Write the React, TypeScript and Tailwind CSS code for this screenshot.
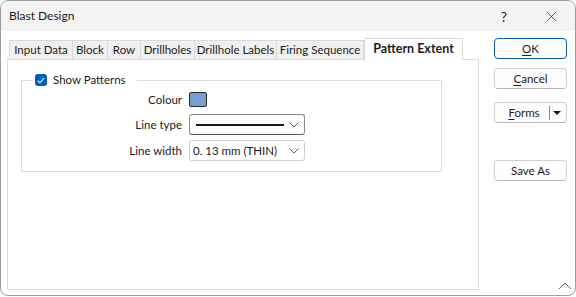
import { X } from 'lucide-react';

const tabs = ['Input Data', 'Block', 'Row', 'Drillholes', 'Drillhole Labels', 'Firing Sequence'];
const tabWidths = ['w-[64px]', 'w-[35px]', 'w-[33px]', 'w-[54px]', 'w-[82px]', 'w-[87px]'];

function Chevron() {
  return (
    <svg width="10" height="6" viewBox="0 0 10 6" className="shrink-0">
      <polyline points="0.5,0.5 5,5 9.5,0.5" fill="none" stroke="#5f5f5f" strokeWidth="1" />
    </svg>
  );
}

function Button({ children, primary }: { children: React.ReactNode; primary?: boolean }) {
  return (
    <button
      className={`w-[73px] h-[21px] rounded-[4px] bg-[#fdfdfd] text-[11.5px] text-[#1b1b1b] flex items-center justify-center ${
        primary ? 'border border-[#005fb8]' : 'border border-[#d0d0d0] border-b-[#b8b8b8]'
      }`}
    >
      {children}
    </button>
  );
}

export default function App() {
  return (
    <div className="w-[576px] h-[297px] bg-white" style={{ fontFamily: 'Lato, "Segoe UI", sans-serif' }}>
      <div className="w-[576px] h-[296px] border border-[#9d9d9d] rounded-[8px] overflow-hidden flex flex-col bg-white">
        {/* Title bar */}
        <div className="h-[30px] bg-[#f3f3f3] flex items-center shrink-0">
          <span className="pl-[8px] text-[12px] text-[#1b1b1b]">Blast Design</span>
          <span className="ml-auto text-[14px] text-[#1b1b1b] mr-[36px]">?</span>
          <X className="w-[17px] h-[17px] mr-[15px] text-[#1b1b1b]" strokeWidth={1} />
        </div>

        {/* Body */}
        <div className="flex-1 flex pt-[7px] pl-[6px] relative">
          <div className="w-[472px] flex flex-col">
            {/* Tabs */}
            <div className="flex items-end h-[21px] pl-[2px] text-[11.5px] text-[#1b1b1b]">
              {tabs.map((t, i) => (
                <div
                  key={t}
                  className={`${tabWidths[i]} h-[19px] bg-[#f0f0f0] border border-b-0 border-[#d9d9d9] ${
                    i > 0 ? 'border-l-0' : ''
                  } flex items-center justify-center whitespace-nowrap`}
                >
                  {t}
                </div>
              ))}
              <div className="w-[99px] h-[22px] -mb-px relative z-10 bg-white border border-b-0 border-[#d9d9d9] flex items-center justify-center font-bold text-[12.5px] whitespace-nowrap">
                Pattern Extent
              </div>
            </div>

            {/* Panel */}
            <div className="h-[231px] border border-[#d9d9d9] bg-white pl-[13px] pt-[12px]">
              <fieldset className="w-[421px] border border-[#dcdcdc] pl-[11px] pb-[10px]">
                <legend className="flex items-center h-[16px] px-[2px] text-[11.5px] text-[#1b1b1b]">
                  <span className="w-[12px] h-[12px] rounded-[3px] bg-[#005fb8] flex items-center justify-center">
                    <svg width="8" height="7" viewBox="0 0 8 7">
                      <polyline points="0.8,3.6 3,5.8 7.2,1" fill="none" stroke="white" strokeWidth="1.1" />
                    </svg>
                  </span>
                  <span className="ml-[6px] mr-[9px]">Show Patterns</span>
                </legend>

                <div className="flex flex-col text-[11.5px] text-[#1b1b1b] -ml-[11px]">
                  <div className="flex items-center h-[15px] mt-[4px]">
                    <span className="w-[160px] text-right">Colour</span>
                    <span className="ml-[7px] w-[18px] h-[15px] rounded-[2px] border border-[#2b2b2b] bg-[#77a0d2]" />
                  </div>
                  <div className="flex items-center h-[21px] mt-[7px]">
                    <span className="w-[160px] text-right">Line type</span>
                    <div className="ml-[7px] w-[116px] h-[21px] rounded-[3px] border border-[#8a8a8a] border-b-[#555] bg-white flex items-center pl-[6px] pr-[5px]">
                      <span className="w-[88px] h-[2px] bg-[#1b1b1b]" />
                      <span className="ml-auto">
                        <Chevron />
                      </span>
                    </div>
                  </div>
                  <div className="flex items-center h-[21px] mt-[5px]">
                    <span className="w-[160px] text-right">Line width</span>
                    <div className="ml-[7px] w-[116px] h-[21px] rounded-[3px] border border-[#d0d0d0] bg-white flex items-center pl-[3px] pr-[5px]">
                      <span>0. 13 mm (THIN)</span>
                      <span className="ml-auto">
                        <Chevron />
                      </span>
                    </div>
                  </div>
                </div>
              </fieldset>
            </div>
          </div>

          {/* Buttons */}
          <div className="ml-[15px] flex flex-col">
            <Button primary>
              <span>
                <span className="underline underline-offset-2">O</span>K
              </span>
            </Button>
            <div className="mt-[9px]">
              <Button>
                <span>
                  <span className="underline underline-offset-2">C</span>ancel
                </span>
              </Button>
            </div>
            <div className="mt-[13px] w-[73px] h-[21px] rounded-[4px] bg-[#fdfdfd] border border-[#d0d0d0] border-b-[#b8b8b8] flex items-center text-[11.5px] text-[#1b1b1b]">
              <span className="flex-1 text-center pl-[4px]">
                <span className="underline underline-offset-2">F</span>orms
              </span>
              <span className="w-px h-[14px] bg-[#8a8a8a]" />
              <svg width="14" height="6" viewBox="0 0 14 6" className="mr-[2px]">
                <polygon points="3,1 11,1 7,5" fill="#1b1b1b" />
              </svg>
            </div>
            <div className="mt-[37px]">
              <Button>Save As</Button>
            </div>
          </div>

          {/* Resize grip */}
          <svg width="14" height="8" viewBox="0 0 14 8" className="absolute right-[3px] bottom-[5px]">
            <polyline points="1,7 7,1 13,7" fill="none" stroke="#6a6a6a" strokeWidth="1" />
          </svg>
        </div>
      </div>
    </div>
  );
}
